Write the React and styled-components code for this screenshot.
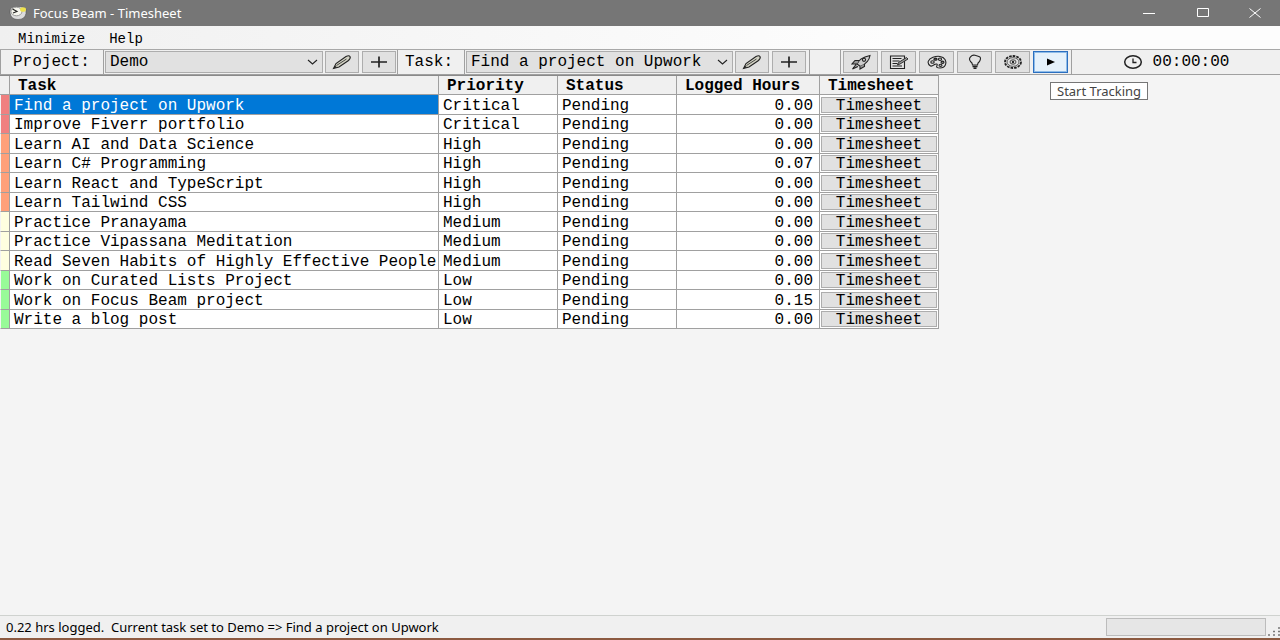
import React from 'react';
import styled, { createGlobalStyle } from 'styled-components';

const GlobalStyle = createGlobalStyle`
    html, body, #root {
        height:100%;
    }
    body {
        margin:0;
        color:#000;
    }
    *, *::before, *::after {
        box-sizing:border-box;
    }
    button, select {
        font:inherit;
        color:inherit;
        margin:0;
    }
`

const Window = styled.div`
    display:flex;
    flex-direction:column;
    min-height:100%;
    background:#f4f4f4;
    border-bottom:2px solid #8c5a41;
    font:16px/18px "Liberation Mono", monospace;
`

const TitleBar = styled.header`
    display:flex;
    align-items:center;
    height:26px;
    padding-left:9px;
    background:#767676;
    color:#fff;
    font:13px/18px "Noto Sans", sans-serif;
`

const Title = styled.h1`
    flex:1;
    margin:0 0 0 6px;
    font:inherit;
`

const CaptionButton = styled.button`
    display:grid;
    place-items:center;
    width:54px;
    height:26px;
    padding:0;
    border:0;
    background:none;
    color:#fff;
    &:last-child {
        width:50px;
    }
`

const MenuBar = styled.nav`
    display:flex;
    align-items:center;
    gap:24px;
    height:23px;
    padding:2px 0 0 18px;
    background:linear-gradient(to right, #f0f0f0, #fdfdfd 70%);
    font-size:14px;
`

const MenuItem = styled.button`
    padding:0;
    border:0;
    background:none;
`

const ToolBar = styled.div`
    display:flex;
    height:26px;
    background:#f0f0f0;
    border-top:1px solid #a8a8a8;
    border-bottom:1px solid #a0a0a0;
`

const Label = styled.label`
    flex:none;
    display:flex;
    align-items:center;
    width:${props => props.$width}px;
    padding-left:${props => props.$indent}px;
    border-left:1px solid #a0a0a0;
    border-right:1px solid #a0a0a0;
`

const Combo = styled.div`
    display:grid;
    flex:0 1 ${props => props.$width}px;
    min-width:0;
    margin:1px 0 1px 1px;
    svg {
        grid-area:1 / 1;
        place-self:center end;
        margin-right:5px;
        pointer-events:none;
    }
`

const Select = styled.select`
    grid-area:1 / 1;
    appearance:none;
    min-width:0;
    padding:0 20px 0 4px;
    border:1px solid #adadad;
    border-radius:0;
    background:#e1e1e1;
`

const ToolButton = styled.button`
    flex:none;
    display:grid;
    place-items:center;
    width:${props => props.$wide ? 35 : 34}px;
    margin:1px 1px 1px 2px;
    padding:0;
    border:1px solid ${props => props.$active ? '#2b6fc0' : '#adadad'};
    background:${props => props.$active ? '#e5f1fb' : '#e1e1e1'};
    outline:${props => props.$active ? '1px solid #8fbce8' : 'none'};
    outline-offset:-2px;
`

const Gap = styled.div`
    flex:none;
    width:32px;
    margin-left:2px;
    border-left:1px solid #a0a0a0;
    border-right:1px solid #a0a0a0;
`

const Tools = styled.div`
    flex:none;
    display:flex;
    padding-right:2px;
    border-right:1px solid #a0a0a0;
`

const Tracker = styled.div`
    position:relative;
    display:flex;
`

const Tooltip = styled.div`
    position:absolute;
    top:32px;
    left:19px;
    z-index:1;
    padding:0 6px;
    border:1px solid #767676;
    background:#fff;
    color:#444;
    font:13px/16px "Noto Sans", sans-serif;
    white-space:nowrap;
`

const Timer = styled.div`
    flex:1;
    display:flex;
    align-items:center;
    justify-content:center;
    gap:10px;
`

const Main = styled.main`
    flex:1;
`

const TaskTable = styled.table`
    border-spacing:0;
    table-layout:fixed;
    width:939px;
    border-top:1px solid #8a8a8a;
    border-right:1px solid #a0a0a0;
    td, th {
        padding:2px 4px 0;
        border-right:1px solid #a0a0a0;
        border-bottom:1px solid #a0a0a0;
        text-align:left;
        white-space:nowrap;
    }
    td:last-child, th:last-child {
        border-right:0;
    }
`

const HeadRow = styled.tr`
    height:19px;
    background:#f0f0f0;
    font-weight:bold;
    line-height:16px;
    th {
        padding-left:8px;
    }
`

const Row = styled.tr`
    height:19px;
    background:#fff;
    line-height:16px;
    &:nth-child(odd) {
        height:20px;
    }
`

const Marker = styled.td`
    background:${props => props.$color};
    border-left:1px solid #f4f4f4;
`

const TaskCell = styled.td`
    background:${props => props.$selected ? '#0078d7' : '#fff'};
    color:${props => props.$selected ? '#fff' : '#000'};
`

const HoursCell = styled.td`
    && {
        padding-right:6px;
        text-align:right;
    }
`

const ButtonCell = styled.td`
    && {
        padding:1px;
    }
`

const SheetButton = styled.button`
    display:block;
    width:100%;
    height:16px;
    padding:0;
    border:1px solid #adadad;
    background:#e1e1e1;
    line-height:16px;
`

const StatusBar = styled.footer`
    display:flex;
    align-items:center;
    justify-content:space-between;
    height:23px;
    padding-left:6px;
    border-top:1px solid #cfd2cf;
    background:#f0f0f0;
    font:13px/18px "Noto Sans", sans-serif;
    white-space:pre;
`

const StatusEnd = styled.div`
    display:flex;
    align-items:flex-end;
    gap:2px;
`

const Progress = styled.div`
    width:160px;
    height:18px;
    border:1px solid #bcbcbc;
    background:#e6e6e6;
`

const priorityColors = {
    Critical: '#f08080',
    High: '#ffa07a',
    Medium: '#ffffe0',
    Low: '#98fb98',
}

const tasks = [
    { name: 'Find a project on Upwork', priority: 'Critical', hours: 0 },
    { name: 'Improve Fiverr portfolio', priority: 'Critical', hours: 0 },
    { name: 'Learn AI and Data Science', priority: 'High', hours: 0 },
    { name: 'Learn C# Programming', priority: 'High', hours: 0.07 },
    { name: 'Learn React and TypeScript', priority: 'High', hours: 0 },
    { name: 'Learn Tailwind CSS', priority: 'High', hours: 0 },
    { name: 'Practice Pranayama', priority: 'Medium', hours: 0 },
    { name: 'Practice Vipassana Meditation', priority: 'Medium', hours: 0 },
    { name: 'Read Seven Habits of Highly Effective People', priority: 'Medium', hours: 0 },
    { name: 'Work on Curated Lists Project', priority: 'Low', hours: 0 },
    { name: 'Work on Focus Beam project', priority: 'Low', hours: 0.15 },
    { name: 'Write a blog post', priority: 'Low', hours: 0 },
]

function Icon({ width = 20, height = 16, children }){
    return(
        <svg width={width} height={height} viewBox={`0 0 ${width} ${height}`} fill="none" stroke="#222" strokeWidth="1.1" aria-hidden="true">
            {children}
        </svg>
    )
}

const Chevron = () => <Icon width={11} height={6}><path d="M1 1l4.5 4L10 1" /></Icon>

const Pencil = () => (
    <Icon>
        <path d="M1.500 14.500l2.500-5L14 2.500q3-1.500 4 0t-1.500 4L7 13z" fill="#d2d2c4" />
        <path d="M4.500 11.500L14.500 5" strokeWidth=".8" />
        <path d="M1.500 14.500l3.500-1.200-2-1.600z" fill="#222" stroke="none" />
    </Icon>
)

const Plus = () => <Icon><path d="M2 8h16M10 2.500v11" strokeWidth="1.700" /></Icon>

const Rocket = () => (
    <Icon>
        <path d="M6 10q2-6 13-8.500q-1 7-9.500 11z" fill="#ccc" />
        <circle cx="13" cy="5.800" r="1.600" />
        <path d="M8 6.500H4L1 10H6M13.500 10v2.500l-4.500 2.500v-2.500M5 10.500l-3.500 4.500L7 12.500" fill="#999" />
    </Icon>
)

const Memo = () => (
    <Icon>
        <path d="M1.500 2h14v12.500h-14z" />
        <path d="M3.500 4.500h9M3.500 7h7M3.500 9.500h5M3.500 12h9.500" />
        <path d="M8.500 11l1-2.500L17.500 3.500l1.500 1.500L11 10z" fill="#999" strokeWidth=".9" />
    </Icon>
)

const Palette = () => (
    <Icon>
        <path d="M3.500 12C-1 9 1.500 5 6 3.300S16 2 18 5.500s.5 8.500-5 8.500c-3 0-4-1-3-2.500s-1-2-2.500-1-2 2-4 1.500z" />
        <ellipse cx="5.500" cy="8" rx="1.700" ry="1.300" /><ellipse cx="8.500" cy="5.200" rx="1.600" ry="1.100" fill="#555" />
        <ellipse cx="13" cy="5.200" rx="1.600" ry="1.200" /><ellipse cx="15.500" cy="8.300" rx="1.500" ry="1.200" fill="#888" />
        <ellipse cx="13.500" cy="11.300" rx="1.500" ry="1.100" />
    </Icon>
)

const Bulb = () => (
    <Icon>
        <path d="M7.500 11q0-2-2-3.500Q3.500 5 5.500 2.800T10 1.300t4.500 1.500 0 4.700Q12.500 9 12.500 11z" />
        <path d="M7.500 12.500h5M8.500 14.300h3" strokeWidth="1.400" />
    </Icon>
)

const Gear = () => (
    <Icon>
        <ellipse cx="10" cy="8" rx="8" ry="6" strokeWidth="1.800" strokeDasharray="2.600 1" />
        <ellipse cx="10" cy="8" rx="6" ry="4.300" strokeWidth=".7" />
        <ellipse cx="10" cy="8" rx="3" ry="2.200" strokeWidth=".8" />
        <circle cx="10" cy="8" r="1.200" fill="#222" stroke="none" />
    </Icon>
)

const Play = () => <Icon><path d="M6 4.500v7l8-3.500z" fill="#000" stroke="none" /></Icon>

const Clock = () => (
    <Icon>
        <ellipse cx="10" cy="8" rx="8.300" ry="6.200" strokeWidth="1.500" />
        <path d="M10 4.500V8.500h3.500" strokeWidth="1.300" />
    </Icon>
)

const AppIcon = () => (
    <Icon width={18} height={16}>
        <path d="M1 6q0-4.500 7-4.500t9 3v4q-1 6-8 6T1 8z" fill="#dcdcdc" stroke="#555" strokeWidth=".6" />
        <ellipse cx="7.500" cy="6.500" rx="5.500" ry="4.300" fill="#f6f6ee" stroke="#888" strokeWidth=".8" />
        <path d="M3.500 4l4.500 2.500-4 1.500" stroke="#222" />
        <ellipse cx="14" cy="4.500" rx="3" ry="2.300" fill="#efe34e" stroke="none" />
    </Icon>
)

const SizeGrip = () => (
    <Icon width={12} height={12}>
        <path d="M0 11h12M5 7.500h7M10 4h2" stroke="#777" strokeWidth="1.500" strokeDasharray="2 3" />
    </Icon>
)

function TopBar(){
    return(
        <TitleBar>
            <AppIcon />
            <Title>Focus Beam - Timesheet</Title>
            <CaptionButton aria-label="Minimize">
                <svg width="12" height="12"><path d="M0 6.500h12" stroke="#fff" /></svg>
            </CaptionButton>
            <CaptionButton aria-label="Maximize">
                <svg width="12" height="10" fill="none"><path d="M.5.5h11v8H.5z" stroke="#fff" /></svg>
            </CaptionButton>
            <CaptionButton aria-label="Close">
                <svg width="12" height="10"><path d="M.5.5l11 9M11.500.5l-11 9" stroke="#fff" /></svg>
            </CaptionButton>
        </TitleBar>
    )
}

function Tasks(){
    return(
        <TaskTable>
            <colgroup>
                <col width="10" />
                <col width="429" />
                <col width="119" />
                <col width="119" />
                <col width="143" />
                <col />
            </colgroup>
            <thead>
                <HeadRow>
                    <th></th>
                    <th>Task</th>
                    <th>Priority</th>
                    <th>Status</th>
                    <th>Logged Hours</th>
                    <th>Timesheet</th>
                </HeadRow>
            </thead>
            <tbody>
                {tasks.map((task, index) => (
                    <Row key={task.name}>
                        <Marker $color={priorityColors[task.priority]} />
                        <TaskCell $selected={index === 0}>{task.name}</TaskCell>
                        <td>{task.priority}</td>
                        <td>Pending</td>
                        <HoursCell>{task.hours.toFixed(2)}</HoursCell>
                        <ButtonCell><SheetButton>Timesheet</SheetButton></ButtonCell>
                    </Row>
                ))}
            </tbody>
        </TaskTable>
    )
}

function App(){
    return(
        <Window>
            <GlobalStyle />
            <TopBar />
            <MenuBar>
                <MenuItem>Minimize</MenuItem>
                <MenuItem>Help</MenuItem>
            </MenuBar>
            <ToolBar>
                <Label htmlFor="project" $width={104} $indent={12}>Project:</Label>
                <Combo $width={218}>
                    <Select id="project"><option>Demo</option></Select>
                    <Chevron />
                </Combo>
                <ToolButton aria-label="Edit project"><Pencil /></ToolButton>
                <ToolButton aria-label="Add project"><Plus /></ToolButton>
                <Label htmlFor="task" $width={68} $indent={7}>Task:</Label>
                <Combo $width={267}>
                    <Select id="task">
                        {tasks.map(task => <option key={task.name}>{task.name}</option>)}
                    </Select>
                    <Chevron />
                </Combo>
                <ToolButton aria-label="Edit task"><Pencil /></ToolButton>
                <ToolButton aria-label="Add task"><Plus /></ToolButton>
                <Gap />
                <Tools>
                    <ToolButton $wide aria-label="Launch"><Rocket /></ToolButton>
                    <ToolButton $wide aria-label="Notes"><Memo /></ToolButton>
                    <ToolButton $wide aria-label="Theme"><Palette /></ToolButton>
                    <ToolButton $wide aria-label="Ideas"><Bulb /></ToolButton>
                    <ToolButton $wide aria-label="Settings"><Gear /></ToolButton>
                    <Tracker>
                        <ToolButton $wide $active aria-describedby="tip" aria-label="Start Tracking"><Play /></ToolButton>
                        <Tooltip id="tip" role="tooltip">Start Tracking</Tooltip>
                    </Tracker>
                </Tools>
                <Timer>
                    <Clock />
                    <span>00:00:00</span>
                </Timer>
            </ToolBar>
            <Main>
                <Tasks />
            </Main>
            <StatusBar>
                <span>0.22 hrs logged.  Current task set to Demo =&gt; Find a project on Upwork</span>
                <StatusEnd>
                    <Progress />
                    <SizeGrip />
                </StatusEnd>
            </StatusBar>
        </Window>
    )
}

export default App
